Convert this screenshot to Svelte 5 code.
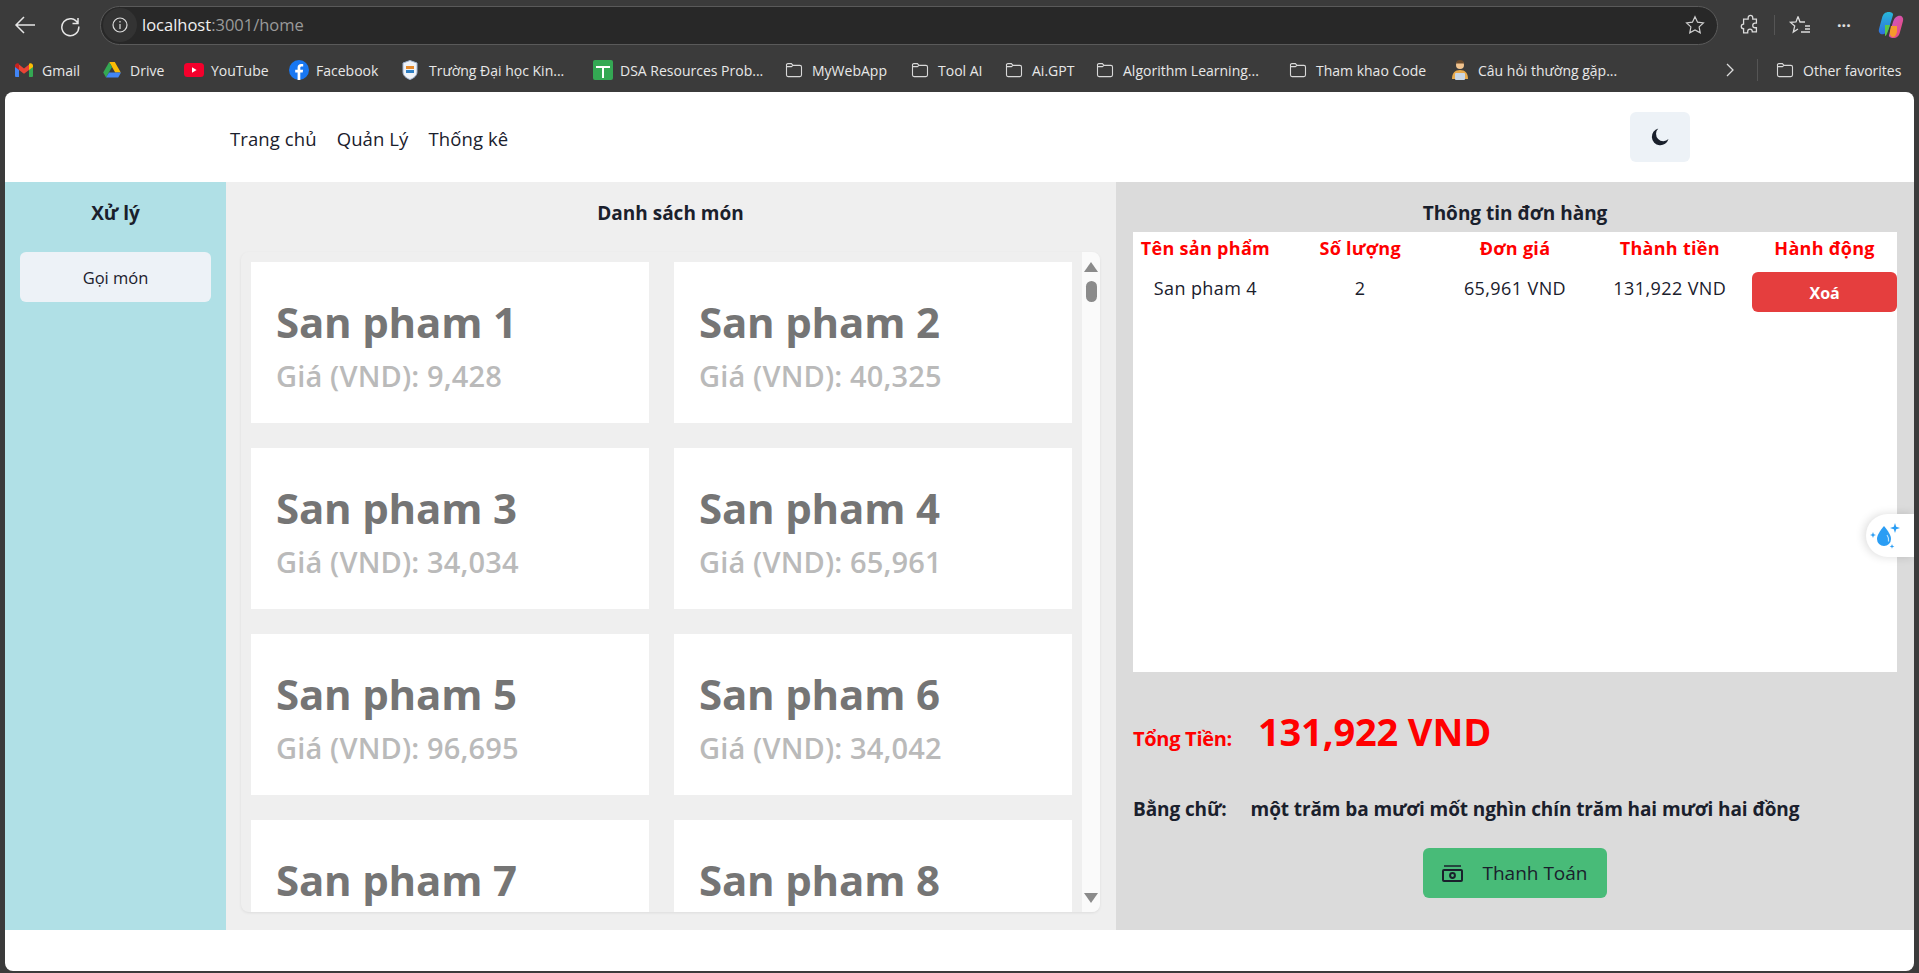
<script>
  const bookmarks = [
    { name: "Gmail", icon: "gmail", w: 88 },
    { name: "Drive", icon: "drive", w: 81 },
    { name: "YouTube", icon: "youtube", w: 105 },
    { name: "Facebook", icon: "facebook", w: 113 },
    { name: "Trường Đại học Kin...", icon: "school", w: 191 },
    { name: "DSA Resources Prob...", icon: "sheet", w: 192 },
    { name: "MyWebApp", icon: "folder", w: 126 },
    { name: "Tool AI", icon: "folder", w: 94 },
    { name: "Ai.GPT", icon: "folder", w: 91 },
    { name: "Algorithm Learning...", icon: "folder", w: 193 },
    { name: "Tham khao Code", icon: "folder", w: 162 },
    { name: "Câu hỏi thường gặp...", icon: "person", w: 274 }
  ];

  const products = [
    { name: "San pham 1", price: "9,428" },
    { name: "San pham 2", price: "40,325" },
    { name: "San pham 3", price: "34,034" },
    { name: "San pham 4", price: "65,961" },
    { name: "San pham 5", price: "96,695" },
    { name: "San pham 6", price: "34,042" },
    { name: "San pham 7", price: "12,310" },
    { name: "San pham 8", price: "58,207" }
  ];

  const columns = ["Tên sản phẩm", "Số lượng", "Đơn giá", "Thành tiền", "Hành động"];
</script>

{#snippet folder()}
  <svg width="18" height="16" viewBox="0 0 18 16" fill="none" stroke="#d8d8d8" stroke-width="1.1">
    <path d="M1.5 3.5V13a1.6 1.6 0 0 0 1.6 1.6h11.8a1.6 1.6 0 0 0 1.6-1.6V5a1.6 1.6 0 0 0-1.6-1.6H8L6.4 1.6H3A1.5 1.5 0 0 0 1.5 3.5Z" />
    <path d="M1.5 4.6H6.4L8 3.4" />
  </svg>
{/snippet}

{#snippet bookmarkIcon(kind)}
  {#if kind === "gmail"}
    <svg width="18" height="14" viewBox="0 0 18 14">
      <path d="M0 2.5V13a1 1 0 0 0 1 1h3V6Z" fill="#4285f4" />
      <path d="M18 2.5V13a1 1 0 0 1-1 1h-3V6Z" fill="#34a853" />
      <path d="M4 7V1.6L9 5.4l5-3.8V7L9 10.8Z" fill="#ea4335" />
      <path d="M0 2.5C0 .6 2.2-.5 3.6.6L4 1v6L0 4Z" fill="#c5221f" />
      <path d="M18 2.5c0-1.9-2.2-3-3.6-1.9L14 1v6l4-3Z" fill="#fbbc04" />
    </svg>
  {:else if kind === "drive"}
    <svg width="18" height="16" viewBox="0 0 18 16">
      <path d="M6.2 0h5.6l6 10.4h-5.6Z" fill="#fbbc04" />
      <path d="M6.2 0 .2 10.4 3 15.4 9 5Z" fill="#34a853" />
      <path d="M6 10.4h12L15.2 15.4H3Z" fill="#4285f4" />
    </svg>
  {:else if kind === "youtube"}
    <svg width="20" height="14" viewBox="0 0 20 14">
      <rect width="20" height="14" rx="3.5" fill="#f5002c" />
      <path d="M8 4.2v5.6L12.6 7Z" fill="#fff" />
    </svg>
  {:else if kind === "facebook"}
    <svg width="20" height="20" viewBox="0 0 20 20">
      <circle cx="10" cy="10" r="10" fill="#1877f2" />
      <path d="M11.3 20v-7.4h2.4l.4-2.9h-2.8V8c0-.8.3-1.4 1.5-1.4h1.4V4.1c-.5-.1-1.2-.2-2-.2-2.3 0-3.6 1.3-3.6 3.7v2.1H6.2v2.9h2.4V20Z" fill="#fff" />
    </svg>
  {:else if kind === "school"}
    <svg width="16" height="20" viewBox="0 0 16 20">
      <path d="M8 .5 15 3v9c0 3.500-3 6-7 7.500C4 18 1 15.500 1 12V3Z" fill="#f0f3f8" stroke="#9fb4d4" />
      <rect x="4" y="6" width="8" height="3" fill="#e58a2e" />
      <rect x="4" y="10" width="8" height="3" fill="#2e7fc4" />
    </svg>
  {:else if kind === "sheet"}
    <svg width="20" height="20" viewBox="0 0 20 20">
      <rect width="20" height="20" rx="2" fill="#34a853" />
      <path d="M3 6h14v2H11v10H9V8H3Z" fill="#fff" />
    </svg>
  {:else if kind === "person"}
    <svg width="18" height="20" viewBox="0 0 18 20">
      <circle cx="9" cy="5" r="4" fill="#f2c48f" />
      <path d="M5 3.500C5 1 7 0 9 0s4 1 4 3.500Z" fill="#6a4a2c" />
      <path d="M1 19c0-6 3-9 8-9s8 3 8 9Z" fill="#e6a94c" />
      <rect x="4" y="13" width="10" height="7" rx="1" fill="#c8d6e5" />
    </svg>
  {:else}
    {@render folder()}
  {/if}
{/snippet}

<div class="window">
  <div class="toolbar">
    <svg class="nav-icon" width="24" height="24" viewBox="0 0 24 24" fill="none" stroke="#e6e6e6" stroke-width="1.5">
      <path d="M22 12H3M11 4l-8 8 8 8" />
    </svg>
    <svg class="nav-icon reload" width="24" height="24" viewBox="0 0 24 24" fill="none" stroke="#e6e6e6" stroke-width="1.5">
      <path d="M20 5v5.500h-5.500M20 10.500a8.500 8.500 0 1 0 .8 3" />
    </svg>
    <div class="omnibox">
      <span class="info">
        <svg width="18" height="18" viewBox="0 0 18 18" fill="none" stroke="#dcdcdc" stroke-width="1.2">
          <circle cx="9" cy="9" r="7" />
          <path d="M9 8v5M9 5v1.500" />
        </svg>
      </span>
      <span class="url"><b>localhost</b>:3001/home</span>
      <svg class="star" width="22" height="22" viewBox="0 0 24 24" fill="none" stroke="#cfcfcf" stroke-width="1.3">
        <path d="m12 3 2.800 5.900 6.400.8-4.700 4.400 1.200 6.400L12 17.400l-5.700 3.100 1.200-6.400L2.800 9.700l6.400-.8Z" />
      </svg>
    </div>
    <div class="tools">
      <svg width="22" height="22" viewBox="0 0 24 24" fill="none" stroke="#dcdcdc" stroke-width="1.4">
        <path d="M10 4a2.500 2.500 0 0 1 5 0v1.500h4v4.500h-1.500a2.500 2.500 0 0 0 0 5H19v4.500h-4.500V19a2.500 2.500 0 0 0-5 0v1.500H5V16a2.500 2.500 0 0 1 0-5V5.500h5Z" />
      </svg>
      <span class="tool-sep"></span>
      <svg width="24" height="24" viewBox="0 0 24 24" fill="none" stroke="#dcdcdc" stroke-width="1.3">
        <path d="M10 3.500 12 9h5M10 3.500 8 9l-5.500.4 4.200 3.700L5.300 19 10 16M17 13h5M17 16h5M13 19h9" />
      </svg>
      <span class="dots">···</span>
      <svg width="26" height="28" viewBox="0 0 26 28">
        <defs>
          <linearGradient id="cp1" x1="0" y1="0" x2="0" y2="1">
            <stop offset="0" stop-color="#28b8d8" />
            <stop offset="1" stop-color="#2f6fe0" />
          </linearGradient>
          <linearGradient id="cp2" x1="0" y1="0" x2="1" y2="1">
            <stop offset="0" stop-color="#c35ad8" />
            <stop offset="1" stop-color="#f0486a" />
          </linearGradient>
        </defs>
        <path d="M11 1c-4 0-6 2-7 6L1 18c-1 4 2 6 5 5 3-1 4-3 5-6l4-13c.5-2-2-3-4-3Z" fill="url(#cp1)" />
        <path d="M15 27c4 0 6-2 7-6l3-11c1-4-2-6-5-5-3 1-4 3-5 6l-4 13c-.5 2 2 3 4 3Z" fill="url(#cp2)" />
        <path d="M7 14h5l-2 6c-1 3-2 5-3 5Z" fill="#58c84a" />
        <path d="M19 15h-6l-1 5c-.500 3 .500 6 3 6 2 0 3-2 4-5Z" fill="#f59a2c" />
      </svg>
    </div>
  </div>

  <div class="bookmarks">
    {#each bookmarks as b}
      <div class="bookmark" style="width: {b.w}px">
        <span class="bm-icon">{@render bookmarkIcon(b.icon)}</span>
        <span>{b.name}</span>
      </div>
    {/each}
    <svg class="chevron" width="10" height="16" viewBox="0 0 10 16" fill="none" stroke="#dcdcdc" stroke-width="1.3">
      <path d="m2 2 6 6-6 6" />
    </svg>
    <span class="bm-sep"></span>
    <div class="bookmark">
      <span class="bm-icon">{@render folder()}</span>
      <span>Other favorites</span>
    </div>
  </div>

  <div class="page">
    <header>
      <nav>
        <span>Trang chủ</span>
        <span>Quản Lý</span>
        <span>Thống kê</span>
      </nav>
      <button class="theme" aria-label="Toggle theme">
        <svg width="20" height="20" viewBox="0 0 20 20">
          <path d="M8.300 1.500a8.500 8.500 0 1 0 10.200 10.600A7 7 0 0 1 8.300 1.500Z" fill="#1a202c" />
        </svg>
      </button>
    </header>

    <main>
      <aside>
        <h2>Xử lý</h2>
        <button class="menu-btn">Gọi món</button>
      </aside>

      <section class="menu">
        <h2>Danh sách món</h2>
        <div class="list">
          <div class="cards">
            {#each products as p}
              <div class="card">
                <div class="card-name">{p.name}</div>
                <div class="card-price">Giá (VND): {p.price}</div>
              </div>
            {/each}
          </div>
          <div class="track">
            <span class="arrow up"></span>
            <span class="thumb"></span>
            <span class="arrow down"></span>
          </div>
        </div>
      </section>

      <section class="order">
        <h2>Thông tin đơn hàng</h2>
        <div class="table">
          <div class="row head">
            {#each columns as c}
              <span>{c}</span>
            {/each}
          </div>
          <div class="row item">
            <span>San pham 4</span>
            <span>2</span>
            <span>65,961 VND</span>
            <span>131,922 VND</span>
            <button class="delete">Xoá</button>
          </div>
        </div>
        <div class="total">
          <span class="total-label">Tổng Tiền:</span>
          <span class="total-value">131,922 VND</span>
        </div>
        <div class="words">
          <span>Bằng chữ:</span>
          <span>một trăm ba mươi mốt nghìn chín trăm hai mươi hai đồng</span>
        </div>
        <button class="pay">
          <svg width="21" height="17" viewBox="0 0 21 17" fill="none" stroke="#1a202c" stroke-width="2">
            <rect x="1" y="5" width="19" height="11" rx="1" />
            <circle cx="10.500" cy="10.500" r="2.400" fill="#48bb78" />
            <path d="M2 1h17" stroke-width="1.500" />
          </svg>
          Thanh Toán
        </button>
      </section>
    </main>
    <div class="foot"></div>

    <div class="floater">
      <svg width="30" height="30" viewBox="0 0 30 30" fill="#2a9df4">
        <path d="M14 3c4 5 7 9 7 13a7 7 0 0 1-14 0c0-4 3-8 7-13Z" />
        <path d="M17 12c1.500 2 2 4 1.500 6.500" fill="none" stroke="#bfe3fb" stroke-width="1.200" />
        <path d="M25 0l1.200 3.800L30 5l-3.800 1.200L25 10l-1.200-3.800L20 5l3.800-1.200Z" />
        <path d="M3 9l.8 2.200L6 12l-2.200.8L3 15l-.8-2.200L0 12l2.200-.8Z" />
        <path d="M22 21l.6 1.800 1.800.6-1.800.6-.6 1.800-.6-1.800-1.800-.6 1.800-.6Z" />
      </svg>
    </div>
  </div>
</div>

<style>
  :global(body) {
    margin: 0;
    overflow: hidden;
  }
  .window {
    width: 1919px;
    height: 973px;
    background: #3b3b3b;
    display: flex;
    flex-direction: column;
    font-family: "Open Sans", "Noto Sans", sans-serif;
    color: #1a202c;
  }

  .toolbar {
    height: 50px;
    display: flex;
    align-items: center;
    padding: 0 14px 0 13px;
    box-sizing: border-box;
    flex-shrink: 0;
  }
  .nav-icon {
    flex-shrink: 0;
  }
  .reload {
    margin-left: 21px;
  }
  .omnibox {
    margin-left: 18px;
    height: 39px;
    width: 1618px;
    box-sizing: border-box;
    background: #282828;
    border: 1px solid #5a5a5a;
    border-radius: 20px;
    display: flex;
    align-items: center;
    flex-shrink: 0;
  }
  .info {
    width: 34px;
    height: 34px;
    margin-left: 2px;
    background: #333;
    border-radius: 50%;
    display: flex;
    align-items: center;
    justify-content: center;
  }
  .url {
    margin-left: 5px;
    padding-bottom: 2px;
    font-size: 16.500px;
    color: #9a9a9a;
    flex: 1;
  }
  .url b {
    font-weight: 400;
    color: #f0f0f0;
  }
  .star {
    margin-right: 11px;
  }
  .tools {
    display: flex;
    align-items: center;
    margin-left: 21px;
  }
  .tool-sep {
    width: 1px;
    height: 20px;
    background: #555;
    margin: 0 13px;
  }
  .dots {
    color: #e0e0e0;
    font-size: 16px;
    font-weight: 700;
    margin: 0 27px 0 25px;
  }

  .bookmarks {
    height: 42px;
    box-sizing: border-box;
    padding: 0 0 2px 15px;
    display: flex;
    align-items: center;
    font-size: 14px;
    color: #e8e8e8;
    flex-shrink: 0;
  }
  .bookmark {
    display: flex;
    align-items: center;
    white-space: nowrap;
    flex-shrink: 0;
  }
  .bm-icon {
    width: 27px;
    display: flex;
    align-items: center;
  }
  .bm-sep {
    width: 1px;
    height: 22px;
    background: #555;
    margin: 0 18px 0 22px;
  }

  .page {
    position: relative;
    flex: 1;
    margin: 0 5px 2px;
    background: #fff;
    border-radius: 8px;
    overflow: hidden;
    display: flex;
    flex-direction: column;
  }
  header {
    height: 90px;
    display: flex;
    align-items: center;
    justify-content: space-between;
    padding: 0 224px 0 225px;
    flex-shrink: 0;
  }
  nav {
    display: flex;
    gap: 20px;
    font-size: 18.500px;
    letter-spacing: 0.1px;
    padding-top: 2px;
  }
  button {
    border: 0;
    font-family: inherit;
    color: inherit;
    padding: 0;
  }
  .theme {
    width: 60px;
    height: 50px;
    background: #edf2f7;
    border-radius: 6px;
    display: flex;
    align-items: center;
    justify-content: center;
  }

  main {
    height: 748px;
    display: flex;
    flex-shrink: 0;
  }
  h2 {
    margin: 0;
    font-size: 19px;
    font-weight: 700;
    line-height: 24px;
    padding-top: 19px;
    text-align: center;
    letter-spacing: 0;
  }
  aside {
    width: 221px;
    background: #b0e0e6;
    box-sizing: border-box;
    padding: 0 15px;
    flex-shrink: 0;
  }
  .menu-btn {
    display: block;
    width: 100%;
    height: 50px;
    margin-top: 27px;
    background: #edf2f7;
    border-radius: 6px;
    font-size: 16.500px;
    font-weight: 500;
  }

  .menu {
    width: 890px;
    background: #efefef;
    box-sizing: border-box;
    padding: 0 16px 0 15px;
    flex-shrink: 0;
  }
  .list {
    height: 660px;
    margin-top: 27px;
    border-radius: 8px;
    box-shadow: 0 1px 3px rgba(0, 0, 0, 0.08);
    overflow: hidden;
    display: flex;
  }
  .cards {
    flex: 1;
    display: grid;
    grid-template-columns: 398px 398px;
    grid-auto-rows: 161px;
    gap: 25px;
    padding: 10px 0 0 10px;
    overflow: hidden;
  }
  .card {
    background: #fff;
    box-sizing: border-box;
    padding: 24px 25px 0;
  }
  .card-name {
    font-size: 42px;
    font-weight: 700;
    line-height: 72px;
    color: #757575;
    letter-spacing: -0.2px;
    white-space: nowrap;
  }
  .card-price {
    font-size: 29px;
    font-weight: 600;
    line-height: 36px;
    color: #bababa;
    letter-spacing: 0.15px;
    white-space: nowrap;
  }
  .track {
    width: 18px;
    background: #fafafa;
    display: flex;
    flex-direction: column;
    align-items: center;
    padding: 10px 0 9px;
    box-sizing: border-box;
    flex-shrink: 0;
  }
  .thumb {
    width: 11px;
    height: 21px;
    margin-top: 9px;
    border-radius: 6px;
    background: #8b8b8b;
  }
  .arrow {
    width: 0;
    height: 0;
    border-left: 7px solid transparent;
    border-right: 7px solid transparent;
  }
  .up {
    border-bottom: 10px solid #8b8b8b;
  }
  .down {
    margin-top: auto;
    border-top: 10px solid #8b8b8b;
  }

  .order {
    flex: 1;
    background: #dbdbdb;
    box-sizing: border-box;
    padding: 0 17px;
    display: flex;
    flex-direction: column;
  }
  .order h2 {
    height: 50px;
    box-sizing: border-box;
  }
  .table {
    height: 440px;
    background: #fff;
    flex-shrink: 0;
  }
  .row {
    display: grid;
    grid-template-columns: repeat(5, 1fr);
    column-gap: 10px;
    text-align: center;
  }
  .head {
    height: 32px;
    align-items: center;
    font-size: 18px;
    font-weight: 700;
    color: #f00;
    letter-spacing: 0.3px;
    white-space: nowrap;
  }
  .item {
    margin-top: 8px;
    font-size: 18px;
    letter-spacing: 0.4px;
    white-space: nowrap;
  }
  .item span {
    padding-top: 3px;
    line-height: 26px;
  }
  .delete {
    height: 40px;
    background: #e53e3e;
    border-radius: 6px;
    color: #fff;
    font-size: 16px;
    font-weight: 700;
    padding-top: 2px;
  }
  .total {
    display: flex;
    align-items: baseline;
    gap: 26px;
    margin-top: 30px;
    color: #f00;
    font-weight: 700;
    line-height: 58px;
  }
  .total-label {
    font-size: 20px;
    letter-spacing: -0.3px;
  }
  .total-value {
    font-size: 38px;
    letter-spacing: -0.15px;
  }
  .words {
    display: flex;
    gap: 24px;
    margin-top: 29px;
    font-size: 19px;
    font-weight: 700;
    line-height: 24px;
    letter-spacing: -0.1px;
    white-space: nowrap;
  }
  .pay {
    align-self: center;
    width: 184px;
    height: 50px;
    margin-top: 27px;
    background: #48bb78;
    border-radius: 6px;
    font-size: 19px;
    font-weight: 500;
    display: flex;
    align-items: center;
    justify-content: center;
    gap: 19px;
  }

  .foot {
    flex: 1;
  }
  .floater {
    position: absolute;
    right: 0;
    top: 422px;
    width: 48px;
    height: 43px;
    box-sizing: border-box;
    padding: 4px 10px 0 0;
    background: #fff;
    border-radius: 22px 0 0 22px;
    box-shadow: -2px 0 10px rgba(0, 0, 0, 0.14);
    display: flex;
    align-items: center;
    justify-content: center;
  }
</style>
